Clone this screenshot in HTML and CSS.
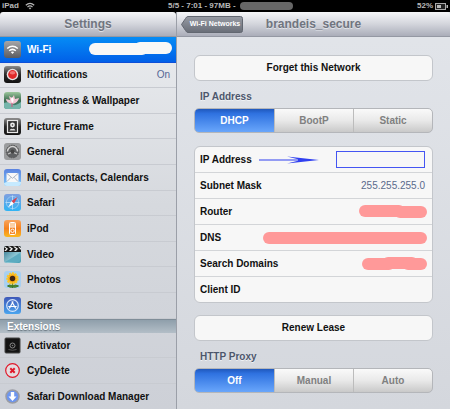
FILE: index.html
```html
<!DOCTYPE html>
<html lang="en">
<head>
  <meta charset="UTF-8" />
  <title>Settings</title>
  <meta name="viewport" content="width=device-width, initial-scale=1" />
  <link rel="stylesheet" href="styles.css">
</head>
<body>

  <!-- Shared gradients for the icons -->
  <svg class="defs" width="0" height="0" aria-hidden="true">
    <defs>
      <linearGradient id="gray" x1="0" y1="0" x2="0" y2="1"><stop offset="0" stop-color="#a6a6a8"/><stop offset="1" stop-color="#5c5c60"/></linearGradient>
      <linearGradient id="black" x1="0" y1="0" x2="0" y2="1"><stop offset="0" stop-color="#8b8b8b"/><stop offset=".5" stop-color="#2a2a2a"/><stop offset="1" stop-color="#111"/></linearGradient>
      <linearGradient id="blue" x1="0" y1="0" x2="0" y2="1"><stop offset="0" stop-color="#5b83e0"/><stop offset="1" stop-color="#7cc6f8"/></linearGradient>
      <linearGradient id="sky" x1="0" y1="0" x2="0" y2="1"><stop offset="0" stop-color="#7f9fe0"/><stop offset="1" stop-color="#30b4f4"/></linearGradient>
      <linearGradient id="orange" x1="0" y1="0" x2="0" y2="1"><stop offset="0" stop-color="#f9a45c"/><stop offset=".5" stop-color="#f58220"/><stop offset="1" stop-color="#fbb81e"/></linearGradient>
      <linearGradient id="film" x1="0" y1="0" x2="1" y2="1"><stop offset="0" stop-color="#2e6f86"/><stop offset=".6" stop-color="#8cc6d4"/><stop offset="1" stop-color="#3f9ab0"/></linearGradient>
      <linearGradient id="store" x1="0" y1="0" x2="0" y2="1"><stop offset="0" stop-color="#3f58b8"/><stop offset="1" stop-color="#4aa4ee"/></linearGradient>
      <linearGradient id="leaf" x1="0" y1="0" x2="0" y2="1"><stop offset="0" stop-color="#9cc79c"/><stop offset=".5" stop-color="#3b6b50"/><stop offset="1" stop-color="#4d8f86"/></linearGradient>
      <linearGradient id="back" x1="0" y1="0" x2="0" y2="1"><stop offset="0" stop-color="#989ca5"/><stop offset="1" stop-color="#686d77"/></linearGradient>
    </defs>
  </svg>

  <header class="status-bar">
    <div class="carrier">
      <span>iPad</span>
      <svg width="10" height="8" viewBox="0 0 10 8" aria-hidden="true">
        <path d="M.8 3.2Q5-.6 9.2 3.2M2.5 5Q5 2.8 7.5 5" fill="none" stroke="#b8b8b8" stroke-width="1.2"/>
        <path d="M3.7 5.9Q5 5 6.3 5.9L5 7.5Z" fill="#b8b8b8"/>
      </svg>
    </div>
    <div class="clock">
      <span>5/5 - 7:01 - 97MB -</span>
      <span class="redacted-dark"></span>
    </div>
    <div class="power">
      <span>52%</span>
      <svg width="13" height="7" viewBox="0 0 13 7" aria-hidden="true">
        <rect x=".5" y=".5" width="10" height="6" fill="#222" stroke="#a8a8a8"/>
        <path d="M2 2h4v3H2zM11.5 2H13v3h-1.500z" fill="#b8b8b8"/>
      </svg>
    </div>
  </header>

  <div class="app">
    <aside class="sidebar">
      <div class="title-bar"><h1>Settings</h1></div>
      <nav class="menu">
        <a href="#" class="item active">
          <svg class="icon" viewBox="0 0 17 17">
            <rect width="17" height="17" rx="3" fill="url(#gray)"/>
            <path d="M3.200 7.500Q8.500 3 13.800 7.500M5.200 9.800Q8.500 7 11.800 9.800" fill="none" stroke="#fff" stroke-width="1.500"/>
            <path d="M6.800 11Q8.500 9.800 10.200 11L8.500 13Z" fill="#fff"/>
          </svg>
          <span>Wi-Fi</span>
          <svg class="value" width="83" height="14" viewBox="0 0 83 14" aria-hidden="true">
            <rect y="1" width="59" height="12" rx="6" fill="#f8f8f6"/>
            <rect x="45" width="38" height="12" rx="6" fill="#f8f8f6"/>
          </svg>
        </a>
        <a href="#" class="item">
          <svg class="icon" viewBox="0 0 17 17">
            <rect width="17" height="17" rx="3" fill="url(#black)"/>
            <circle cx="8.500" cy="8.500" r="5.800" fill="#e8e4e4"/>
            <circle cx="8.500" cy="8.500" r="4.400" fill="#e02a2a"/>
            <ellipse cx="8.500" cy="6.800" rx="2.800" ry="1.800" fill="#f27070"/>
          </svg>
          <span>Notifications</span>
          <span class="value">On</span>
        </a>
        <a href="#" class="item">
          <svg class="icon" viewBox="0 0 17 17">
            <rect width="17" height="17" rx="3" fill="url(#leaf)"/>
            <path d="M0 11q5-2 8 1t9-2v4q0 3-3 3H3q-3 0-3-3z" fill="#76b5ab"/>
            <path d="M8.500 12Q2 11 2 7l4 1-1-4 3 2 2-3 1 4 4-1q-1 5-6.500 6z" fill="#f3c8d4"/>
            <path d="M8.500 11Q6 8 8 5q3 2 .5 6z" fill="#fff"/>
            <path d="M8 11v4" stroke="#d4517a"/>
          </svg>
          <span>Brightness &amp; Wallpaper</span>
        </a>
        <a href="#" class="item">
          <svg class="icon" viewBox="0 0 17 17">
            <rect width="17" height="17" rx="3" fill="url(#black)"/>
            <rect x="3.500" y="2.500" width="10" height="12" fill="#333" stroke="#e8e8e8" stroke-width="1.200"/>
            <circle cx="8.500" cy="7" r="2.400" fill="#eee"/>
            <circle cx="8.500" cy="7" r=".8" fill="#333"/>
            <path d="M5.500 12.500q1-2.500 3-1.500 2-1 3 1.500z" fill="#ddd"/>
          </svg>
          <span>Picture Frame</span>
        </a>
        <a href="#" class="item">
          <svg class="icon" viewBox="0 0 17 17">
            <rect width="17" height="17" rx="3" fill="#9a9c9e"/>
            <circle cx="8.500" cy="8.500" r="6.300" fill="#5e6062" stroke="#555" stroke-dasharray="1.500 1"/>
            <path d="M3.500 8.500a5 5 0 0 1 10 0" fill="none" stroke="#d4d4d4" stroke-width="1.500"/>
            <path d="M4 11l4.500-2 4.500 2" fill="none" stroke="#c4c4c4" stroke-width="1.300"/>
            <circle cx="8.500" cy="8.500" r="2" fill="#444"/>
          </svg>
          <span>General</span>
        </a>
        <a href="#" class="item">
          <svg class="icon" viewBox="0 0 17 17">
            <rect width="17" height="17" rx="3" fill="url(#blue)"/>
            <path d="M0 14q8-4 17-1v1q0 3-3 3H3q-3 0-3-3z" fill="#c6eaff"/>
            <rect x="2.500" y="4" width="12" height="9" rx="1" fill="#f8f8f8"/>
            <path d="M3 4.500l5.500 4.800L14 4.500M3 12.500L7 8.300M14 12.500L10 8.300" fill="none" stroke="#9aa6b8" stroke-width=".8"/>
          </svg>
          <span>Mail, Contacts, Calendars</span>
        </a>
        <a href="#" class="item">
          <svg class="icon" viewBox="0 0 17 17">
            <rect width="17" height="17" rx="3" fill="url(#sky)"/>
            <circle cx="8.500" cy="8.500" r="6.200" fill="none" stroke="#9ccdf4" stroke-width=".8"/>
            <path d="M8.500 1.500v14M1.500 8.500h14" stroke="#c0e2fa" stroke-width=".8"/>
            <path d="M4 13.500L7.500 7l2.500 2.500z" fill="#fff"/>
            <path d="M13.500 3L7.500 7l2.500 2.500z" fill="#d8404e"/>
          </svg>
          <span>Safari</span>
        </a>
        <a href="#" class="item">
          <svg class="icon" viewBox="0 0 17 17">
            <rect width="17" height="17" rx="3" fill="url(#orange)"/>
            <rect x="5.500" y="2.500" width="6" height="12" rx="1" fill="#f58a30" stroke="#fff"/>
            <path d="M6 3h5v3.500H6z" fill="#fbd0a4"/>
            <path d="M5.500 7h6" stroke="#fff"/>
            <circle cx="8.500" cy="10.800" r="1.700" fill="#f58220" stroke="#fff"/>
          </svg>
          <span>iPod</span>
        </a>
        <a href="#" class="item">
          <svg class="icon" viewBox="0 0 17 17">
            <rect width="17" height="17" rx="2" fill="url(#film)"/>
            <path d="M0 6V2q0-2 2-2h13q2 0 2 2v4z" fill="#181818"/>
            <path d="M1 .5l3 2.200L2 5H.2l2-2.200L0 1zM6 .5l3 2.200L7 5H5l2-2.300L4 .5zM11 .5l3 2.200L12 5h-2l2-2.300L9 .5zM15 .5l2 1.500v2l-3-3.500z" fill="#eee"/>
            <path d="M1 16L16 7v7q0 2-2 2z" fill="#5cabc0"/>
          </svg>
          <span>Video</span>
        </a>
        <a href="#" class="item">
          <svg class="icon" viewBox="0 0 17 17">
            <rect width="17" height="17" rx="3" fill="#a8d0f2"/>
            <path d="M8.500 11v6M8.500 15q-3-2-5 0 3 2 5 1M8.500 15q3-2 6 0-3 2-6 1" fill="#508a38" stroke="#3f7a2a"/>
            <circle cx="8.500" cy="7.500" r="5" fill="#f6a818" stroke="#fbc628" stroke-width="2.400" stroke-dasharray="2 .8"/>
            <circle cx="8.500" cy="7.500" r="2.700" fill="#3e2414"/>
          </svg>
          <span>Photos</span>
        </a>
        <a href="#" class="item">
          <svg class="icon" viewBox="0 0 17 17">
            <rect width="17" height="17" rx="3" fill="url(#store)"/>
            <circle cx="8.500" cy="8.500" r="5.800" fill="none" stroke="#d4e4fa" stroke-width="1.200"/>
            <path d="M9.200 4.500L5.300 11.500M7.800 4.500l3.900 7M4.300 9.500h8.400" stroke="#fff" stroke-width="1.200"/>
          </svg>
          <span>Store</span>
        </a>
        <h2 class="group">Extensions</h2>
        <a href="#" class="item">
          <svg class="icon" viewBox="0 0 17 17">
            <rect x="1" y="1" width="15" height="15" rx="1" fill="#141414" stroke="#444"/>
            <circle cx="8.500" cy="8.500" r="2.500" fill="none" stroke="#888"/>
            <circle cx="8.500" cy="8.500" r=".8" fill="#777"/>
            <path d="M4.500 12.500q4 1.500 8 0" fill="none" stroke="#555"/>
          </svg>
          <span>Activator</span>
        </a>
        <a href="#" class="item">
          <svg class="icon" viewBox="0 0 17 17">
            <circle cx="8.500" cy="8.500" r="6.800" fill="#e4dcdf" stroke="#e0182a" stroke-width="1.200"/>
            <path d="M6.300 6.300l4.400 4.400M10.700 6.300l-4.400 4.400" stroke="#e0182a" stroke-width="2"/>
          </svg>
          <span>CyDelete</span>
        </a>
        <a href="#" class="item">
          <svg class="icon" viewBox="0 0 17 17">
            <circle cx="8.500" cy="8.500" r="6.500" fill="#6d95ee" stroke="#9a9ca4" stroke-width="1.500"/>
            <path d="M6.800 4h3.400v4.500h2.300L8.500 13l-4-4.500h2.300z" fill="#fff"/>
          </svg>
          <span>Safari Download Manager</span>
        </a>
      </nav>
    </aside>

    <main class="detail">
      <div class="title-bar">
        <button type="button" class="back">
          <svg class="back-shape" width="62" height="17" viewBox="0 0 62 17" aria-hidden="true">
            <path d="M7 .5H59.500Q61.500.5 61.500 2.500V14.500Q61.500 16.500 59.500 16.500H7Q5.500 16.500 4.500 14.500L.5 8.500 4.500 2.500Q5.500.5 7 .5Z" fill="url(#back)" stroke="#626771"/>
          </svg>
          <span>Wi-Fi Networks</span>
        </button>
        <h1>brandeis_secure</h1>
      </div>

      <form class="content">
        <button type="button" class="action">Forget this Network</button>

        <fieldset>
          <legend>IP Address</legend>
          <div class="segments">
            <label><input type="radio" name="mode" checked><span>DHCP</span></label>
            <label><input type="radio" name="mode"><span>BootP</span></label>
            <label><input type="radio" name="mode"><span>Static</span></label>
          </div>
        </fieldset>

        <table class="network">
          <tr>
            <th scope="row"><label for="ip">IP Address</label></th>
            <td class="ip-field">
              <svg width="60" height="10" viewBox="0 0 60 10" aria-hidden="true">
                <path d="M0 5H50" stroke="#3040f0" stroke-width="1.200"/>
                <path d="M28 1.500L60 5 28 8.500 39 5.800V4.200Z" fill="#3040f0"/>
              </svg>
              <input type="text" id="ip">
            </td>
          </tr>
          <tr><th scope="row">Subnet Mask</th><td>255.255.255.0</td></tr>
          <tr>
            <th scope="row">Router</th>
            <td class="redacted"><svg width="68" height="13" viewBox="0 0 68 13" aria-hidden="true"><rect width="46" height="12" rx="6"/><rect x="35" y="1" width="33" height="12" rx="6"/></svg></td>
          </tr>
          <tr>
            <th scope="row">DNS</th>
            <td class="redacted"><svg width="164" height="12" viewBox="0 0 164 12" aria-hidden="true"><rect width="164" height="12" rx="6"/></svg></td>
          </tr>
          <tr>
            <th scope="row">Search Domains</th>
            <td class="redacted"><svg width="65" height="13" viewBox="0 0 65 13" aria-hidden="true"><rect y="1" width="33" height="12" rx="6"/><rect x="20" width="36" height="12" rx="6"/><rect x="40" y="1" width="25" height="12" rx="6"/></svg></td>
          </tr>
          <tr><th scope="row">Client ID</th><td></td></tr>
        </table>

        <button type="button" class="action">Renew Lease</button>

        <fieldset>
          <legend>HTTP Proxy</legend>
          <div class="segments">
            <label><input type="radio" name="proxy" checked><span>Off</span></label>
            <label><input type="radio" name="proxy"><span>Manual</span></label>
            <label><input type="radio" name="proxy"><span>Auto</span></label>
          </div>
        </fieldset>
      </form>
    </main>
  </div>

</body>
</html>
```
FILE: styles.css
```css
/* Reset and base */
* {
  box-sizing: border-box;
  margin: 0;
  padding: 0;
}
body {
  min-height: 100vh;
  display: flex;
  flex-direction: column;
  background: #000;
  font-family: "Liberation Sans", Arial, Helvetica, sans-serif;
  font-size: 10px;
  line-height: 12px;
  color: #111;
}
button,
input {
  font: inherit;
}
svg {
  display: block;
}
.defs {
  position: absolute;
}

/* Status bar */
.status-bar {
  display: grid;
  grid-template-columns: 166px 1fr auto;
  align-items: center;
  height: 12px;
  padding: 0 2px;
  color: #b8b8b8;
  font-size: 8px;
  font-weight: bold;
  line-height: 10px;
}
.carrier,
.clock,
.power {
  display: flex;
  align-items: center;
  gap: 4px;
}
.carrier {
  gap: 6px;
}
.power {
  gap: 2px;
}
.redacted-dark {
  width: 53px;
  height: 8px;
  border-radius: 4px;
  background: #666;
}

/* Two panes */
.app {
  flex: 1;
  display: grid;
  grid-template-columns: 177px 1fr;
}
.sidebar {
  display: flex;
  flex-direction: column;
  border-right: 1px solid #9b9fa8;
}
.title-bar {
  display: grid;
  grid-template-columns: 1fr auto 1fr;
  align-items: center;
  height: 25px;
  padding: 0 4px;
  border-bottom: 1px solid #9498a3;
  border-radius: 3px 3px 0 0;
  background: linear-gradient(#f6f7f9, #d3d5dc 50%, #aaadb9);
}
.title-bar h1 {
  grid-column: 2;
  color: #70757f;
  font-size: 12px;
  line-height: 14px;
  text-shadow: 0 1px 0 #e0e2e8;
}

/* Sidebar menu */
.menu {
  flex: 1;
  display: flex;
  flex-direction: column;
  background: linear-gradient(#e9ebee, #d6d9de 45%, #cdd0d7);
}
.item {
  flex: 1;
  display: flex;
  align-items: center;
  gap: 6px;
  min-height: 25px;
  padding: 0 4px;
  border-bottom: 1px solid #c8cbd1;
  color: #111;
  font-weight: bold;
  text-decoration: none;
}
.item span {
  padding-top: 1px;
}
.item.active {
  border-bottom-color: #0c4fd8;
  background: linear-gradient(#058cf5, #0160e8);
  color: #fff;
}
.item:last-child {
  border-bottom: 0;
}
.icon {
  flex: none;
  width: 17px;
  height: 17px;
}
.item .value {
  margin-left: auto;
}
span.value {
  padding-right: 2px;
  color: #566896;
  font-weight: normal;
}
.group {
  height: 14px;
  padding: 0 7px;
  border-top: 1px solid #7f8d98;
  background: linear-gradient(#8f9fab, #b3bec7);
  color: #fff;
  font-size: 10px;
  line-height: 13px;
  text-shadow: 0 1px 1px #66727c;
}

/* Detail pane */
.detail {
  min-width: 0;
  background: linear-gradient(#e2e5ea, #d4d7dd);
}
.back {
  position: relative;
  justify-self: start;
  width: 62px;
  height: 17px;
  padding-left: 6px;
  border: 0;
  background: none;
  color: #fff;
  font-size: 7px;
  font-weight: bold;
  white-space: nowrap;
}
.back-shape {
  position: absolute;
  inset: 0;
}
.back span {
  position: relative;
}
.content {
  padding: 18px 17px 16px;
}
.action {
  display: block;
  width: 100%;
  height: 26px;
  border: 1px solid #c3c6cb;
  border-radius: 6px;
  background: #f7f7f7;
  color: #111;
  font-weight: bold;
}
fieldset {
  border: 0;
}
legend {
  padding: 10px 6px 5px;
  color: #4c566c;
  font-weight: bold;
  text-shadow: 0 1px 0 #f0f2f5;
}

/* Segmented control */
.segments {
  display: grid;
  grid-template-columns: repeat(3, 1fr);
  height: 25px;
  border: 1px solid #b4b6ba;
  border-radius: 5px;
  overflow: hidden;
  background: linear-gradient(#fafafa, #e9e9e9 50%, #c9c9c9);
}
.segments label {
  position: relative;
  display: flex;
}
.segments label + label {
  border-left: 1px solid #bcbcbc;
}
.segments input {
  position: absolute;
  opacity: 0;
}
.segments span {
  flex: 1;
  display: flex;
  align-items: center;
  justify-content: center;
  color: #808080;
  font-weight: bold;
}
.segments input:checked + span {
  background: linear-gradient(#2058bc, #2f72e0 20%, #69a6fb);
  color: #fff;
}

/* Network values, each row sizes its own two cells */
.network,
.network tbody {
  display: block;
}
.network {
  margin: 13px 0 12px;
  border: 1px solid #c3c6cb;
  border-radius: 6px;
  background: #f7f7f7;
}
.network tr {
  display: flex;
  align-items: center;
  justify-content: space-between;
  height: 26px;
  padding: 0 7px 0 5px;
  border-bottom: 1px solid #d3d5d8;
}
.network tr:last-child {
  height: 25px;
  border-bottom: 0;
}
.network td {
  color: #5a6a8c;
}
.network .redacted {
  margin-right: -2px;
  fill: #ff9999;
}
.ip-field {
  display: flex;
  align-items: center;
  gap: 17px;
}
.ip-field input {
  width: 89px;
  height: 17px;
  padding: 0 3px;
  border: 1px solid #4455f2;
  border-radius: 0;
  background: transparent;
  appearance: none;
}
```
